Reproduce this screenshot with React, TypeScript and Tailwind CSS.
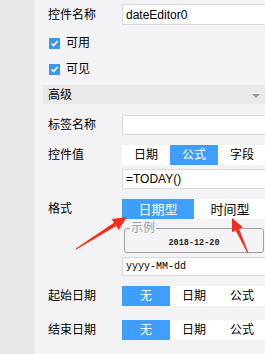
import React from 'react';

const blue = 'bg-[#409eff]';

interface TabsProps {
  items: string[];
  active: number;
  wide?: boolean;
}

const Tabs: React.FC<TabsProps> = ({ items, active, wide }) => (
  <div className="flex h-[20px] w-[160px] shrink-0 bg-white">
    {items.map((t, i) => (
      <div
        key={t}
        className={`flex h-full shrink-0 items-center justify-center leading-none ${wide ? 'w-[72px] text-[13px]' : 'w-[48px]'} ${i === active ? `${blue} text-white` : 'text-black'}`}
      >
        {t}
      </div>
    ))}
  </div>
);

const Check: React.FC<{ label: string }> = ({ label }) => (
  <div className="flex h-[12px] items-center gap-[6px] pl-[15px]">
    <div className="flex h-[11px] w-[11px] items-center justify-center bg-[#3c96ee]">
      <svg width="9" height="9" viewBox="0 0 9 9">
        <path d="M1.5 4.5 L3.6 6.6 L7.6 2" fill="none" stroke="white" strokeWidth="1.6" />
      </svg>
    </div>
    <span className="leading-none">{label}</span>
  </div>
);

const Label: React.FC<{ text: string }> = ({ text }) => (
  <div className="w-[88px] shrink-0 pl-[14px] leading-none">{text}</div>
);

const App: React.FC = () => {
  return (
    <div className="relative flex h-[354px] w-[265px] overflow-hidden font-['Liberation_Sans','Noto_Sans_CJK_SC',sans-serif] text-[12px] text-black">
      <div className="w-[34px] shrink-0 bg-[#e8e8e8]" />
      <div className="flex flex-1 flex-col overflow-hidden bg-[#f3f3f5]">
        <div className="mt-[4px] flex h-[21px] items-center">
          <Label text="控件名称" />
          <div className="flex h-[21px] w-[160px] shrink-0 items-center border border-[#d9d9d9] bg-white pl-[3px] text-[12px]">
            dateEditor0
          </div>
        </div>

        <div className="mt-[12px]">
          <Check label="可用" />
        </div>
        <div className="mt-[14px]">
          <Check label="可见" />
        </div>

        <div className="ml-[9px] mt-[10px] flex h-[19px] items-center justify-between bg-[#e9e9e9] pl-[5px] pr-[5px]">
          <span className="leading-none">高级</span>
          <div className="mt-[2px] h-0 w-0 border-x-[4px] border-t-[4px] border-x-transparent border-t-[#9a9a9a]" />
        </div>

        <div className="mt-[11px] flex h-[20px] items-center">
          <Label text="标签名称" />
          <div className="h-[20px] w-[160px] shrink-0 border border-[#d9d9d9] bg-white" />
        </div>

        <div className="mt-[10px] flex items-center">
          <Label text="控件值" />
          <Tabs items={['日期', '公式', '字段']} active={1} />
        </div>
        <div className="ml-[88px] mt-[4px] flex h-[20px] w-[160px] shrink-0 items-center border border-[#d9d9d9] bg-white pl-[3px]">
          =TODAY()
        </div>

        <div className="mt-[10px] flex items-center">
          <Label text="格式" />
          <Tabs items={['日期型', '时间型']} active={0} wide />
        </div>

        <fieldset className="ml-[90px] mt-[3px] w-[140px] rounded-[3px] border border-[#a0a0a0]">
          <legend className="ml-[5px] px-[1px] text-[12px] leading-[12px] text-[#a0a0a0]">示例</legend>
          <div className="flex h-[18px] items-center justify-center font-['Liberation_Mono',monospace] text-[8.5px] font-semibold leading-none text-[#222]">
            2018-12-20
          </div>
        </fieldset>

        <div className="ml-[88px] mt-[4px] flex h-[19px] w-[160px] shrink-0 items-center border border-[#d9d9d9] bg-white pl-[3px] font-['Liberation_Mono',monospace] text-[10px]">
          yyyy-MM-dd
        </div>

        <div className="mt-[10px] flex items-center">
          <Label text="起始日期" />
          <Tabs items={['无', '日期', '公式']} active={0} />
        </div>
        <div className="mt-[14px] flex items-center">
          <Label text="结束日期" />
          <Tabs items={['无', '日期', '公式']} active={0} />
        </div>
      </div>

      <svg className="pointer-events-none absolute left-0 top-0" width="265" height="354" viewBox="0 0 265 354">
        <polygon
          points="75.7,248.6 114,222.7 111.6,218.9 127,217 118.6,229.9 116.2,226.1 76.3,249.4"
          fill="#f0301f"
        />
        <polygon
          points="248.45,252.8 239.2,229 242.9,227.3 232,218 232,232.3 235.6,230.6 247.55,253.2"
          fill="#f0301f"
        />
      </svg>
    </div>
  );
};

export default App;
